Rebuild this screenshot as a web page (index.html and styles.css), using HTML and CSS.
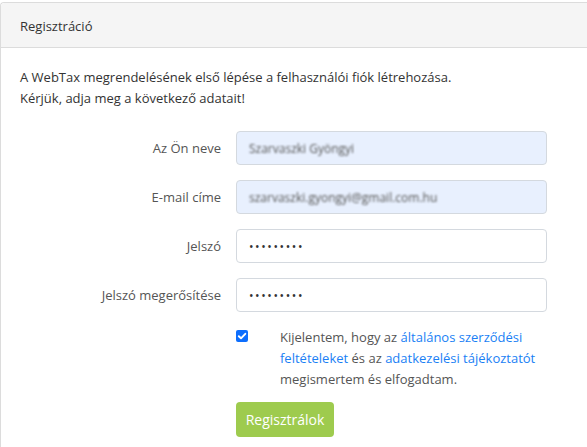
FILE: index.html
```html
<!DOCTYPE html>
<html lang="hu">
<head>
<meta charset="utf-8">
<title>Regisztráció</title>
<link rel="stylesheet" href="styles.css">
</head>
<body>
<div class="card">
  <div class="card-header">Regisztráció</div>
  <div class="card-body">
    <p class="intro">A WebTax megrendelésének első lépése a felhasználói fiók létrehozása.<br>Kérjük, adja meg a következő adatait!</p>
    <form class="form">
      <div class="row">
        <label class="label">Az Ön neve</label>
        <div class="field autofill"><span class="blur">Szarvaszki Gyöngyi</span></div>
      </div>
      <div class="row">
        <label class="label">E-mail címe</label>
        <div class="field autofill"><span class="blur">szarvaszki.gyongyi@gmail.com.hu</span></div>
      </div>
      <div class="row">
        <label class="label">Jelszó</label>
        <div class="field"><span class="dots">•••••••••</span></div>
      </div>
      <div class="row">
        <label class="label">Jelszó megerősítése</label>
        <div class="field"><span class="dots">•••••••••</span></div>
      </div>
      <div class="check-row">
        <span class="checkbox"><svg width="12" height="12" viewBox="0 0 12 12"><path d="M2.8 6.2 L5 8.3 L9.3 3.8" fill="none" stroke="#fff" stroke-width="1.9" stroke-linecap="round" stroke-linejoin="round"/></svg></span>
        <p class="consent"><span class="line">Kijelentem, hogy az <a href="#">általános szerződési</a></span><span class="line"><a href="#">feltételeket</a> és az <a href="#">adatkezelési tájékoztatót</a></span><span class="line">megismertem és elfogadtam.</span></p>
      </div>
      <div class="btn-row">
        <button type="button" class="btn">Regisztrálok</button>
      </div>
    </form>
  </div>
</div>
</body>
</html>
```
FILE: styles.css
```css
* { box-sizing: border-box; }
html, body { margin: 0; padding: 0; background: #fff; }
body {
  font-family: "Open Sans", "Liberation Sans", sans-serif;
  font-size: 13px;
  color: #333;
  padding-top: 2px;
}
.card {
  border: 1px solid #dcdcdc;
  border-right: none;
  border-radius: 4px 0 0 0;
  height: 460px;
}
.card-header {
  background: #f5f5f5;
  border-bottom: 1px solid #dcdcdc;
  height: 45px;
  padding: 14px 0 0 19px;
  color: #333;
  border-radius: 4px 0 0 0;
}
.card-body {
  padding: 19px 0 0 19px;
}
.intro {
  margin: 0;
  line-height: 21px;
}
.form {
  margin-top: 22px;
}
.row {
  display: flex;
  align-items: center;
  margin-bottom: 15px;
}
.label {
  width: 216px;
  text-align: right;
  color: #555;
  padding-right: 15px;
}
.field {
  width: 311px;
  height: 34px;
  border: 1px solid #d4d9df;
  border-radius: 4px;
  display: flex;
  align-items: center;
  padding-left: 12px;
  color: #333;
}
.autofill { background: #e8f0fe; }
.blur { filter: blur(0.8px); color: #555; font-size: 12px; }
.dots { font-size: 12px; letter-spacing: 1.6px; color: #333; }
.check-row {
  display: flex;
  align-items: flex-start;
  margin-top: 14px;
  padding-left: 216px;
}
.checkbox {
  width: 12px;
  height: 12px;
  background: #0d6efd;
  border-radius: 2px;
  margin-top: 3px;
  display: flex;
  flex-shrink: 0;
}
.consent {
  margin: 0 0 0 32px;
  line-height: 21px;
  color: #555;
  display: flex;
  flex-direction: column;
}
.line { display: block; white-space: nowrap; }
.consent a { color: #1a7ff5; text-decoration: none; }
.btn-row {
  padding-left: 216px;
  margin-top: 12px;
}
.btn {
  font-family: inherit;
  font-size: 14px;
  background: #9ecb4e;
  color: #fff;
  border: none;
  border-radius: 4px;
  width: 98px;
  height: 35px;
  padding: 0;
}
```
